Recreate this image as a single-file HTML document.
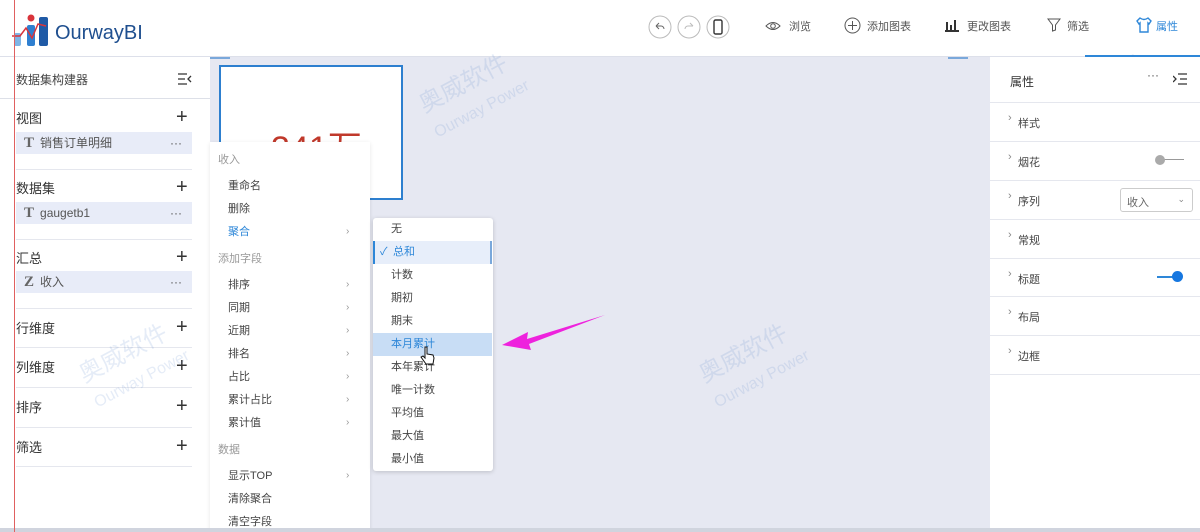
<!DOCTYPE html><html><head><meta charset="utf-8"><style>
*{margin:0;padding:0;box-sizing:border-box}
body{width:1200px;height:532px;overflow:hidden;position:relative;background:#e6e8f2;font-family:"Liberation Sans","Noto Sans CJK SC",sans-serif;font-size:12px;color:#333}
.a{position:absolute}
.hdr{left:0;top:0;width:1200px;height:57px;background:#fff;border-bottom:1px solid #dde0ea}
.lp{left:0;top:57px;width:210px;height:475px;background:#fff}
.rp{left:990px;top:57px;width:210px;height:475px;background:#fff}
.sec{position:absolute;left:16px;font-size:13px;color:#333}
.plus{position:absolute;left:176px;font-size:20px;color:#333;line-height:1}
.item{position:absolute;left:16px;width:176px;height:22px;background:#e8ecf8;font-size:12px;color:#555;line-height:22px;padding-left:8px}
.item b{font-family:"Liberation Serif",serif;font-size:15px;color:#666;margin-right:6px}
.item i{position:absolute;right:10px;font-style:normal;color:#555}
.hl{position:absolute;left:0;width:192px;height:1px;background:#e5e7ee}
.mi{position:absolute;left:228px;font-size:11px;color:#444}
.mg{position:absolute;left:218px;font-size:11px;color:#999}
.ar{position:absolute;left:346px;font-size:10px;color:#999;margin-top:3px}
.si{position:absolute;left:373px;width:119px;height:23px;line-height:23px;padding-left:18px;font-size:11px;color:#444}
.rr{position:absolute;left:990px;width:210px;height:1px;background:#e5e7ee}
.rt{position:absolute;left:1018px;font-size:11px;color:#444}
.rt:before{content:"›";position:absolute;left:-10px;top:-3px;color:#888}
.tb{position:absolute;top:18px;font-size:11px;color:#555}
.wm{position:absolute;color:rgba(70,120,200,.14);font-size:24px;transform:rotate(-28deg);white-space:nowrap}
</style></head><body>
<div class="a hdr"></div>
<svg class="a" style="left:12px;top:14px" width="40" height="34" viewBox="0 0 40 34"><circle cx="19" cy="4" r="3.5" fill="#d9343b"/><rect x="2" y="19" width="7" height="13" rx="2" fill="#7fb5e6"/><rect x="15" y="11" width="8" height="21" rx="2" fill="#2f7fd0"/><rect x="27" y="3" width="9" height="29" rx="2" fill="#1f5aa6"/><polyline points="0,22 8,22 14,14 20,24 26,10 34,12" fill="none" stroke="#d9343b" stroke-width="1.5"/></svg>
<div class="a" style="left:55px;top:22px;font-size:20px;color:#1f4f8f">OurwayBI</div>
<div class="a" style="left:14px;top:0;width:1px;height:532px;background:#e06060;z-index:20"></div>
<svg class="a" style="left:648px;top:15px" width="85" height="25"><g fill="none" stroke="#bbb"><circle cx="12" cy="12" r="11"/><circle cx="41" cy="12" r="11"/><circle cx="70" cy="12" r="11"/></g><path d="M8 11 l3-3 M8 11 l3 3 M8 11 h5 a3 3 0 0 1 3 3" stroke="#666" fill="none"/><path d="M45 11 l-3-3 M45 11 h-5 a3 3 0 0 0 -3 3" stroke="#bbb" fill="none"/><rect x="66" y="5" width="8" height="14" rx="1.5" stroke="#333" fill="none" stroke-width="1.4"/></svg>
<svg class="a" style="left:765px;top:18px" width="16" height="16"><path d="M1 8 Q8 1 15 8 Q8 15 1 8Z" fill="none" stroke="#555"/><circle cx="8" cy="8" r="2.3" fill="none" stroke="#555"/></svg><div class="tb" style="left:789px">浏览</div>
<svg class="a" style="left:844px;top:17px" width="17" height="17"><circle cx="8.5" cy="8.5" r="7.5" fill="none" stroke="#555"/><path d="M8.5 4v9M4 8.5h9" stroke="#555"/></svg><div class="tb" style="left:867px">添加图表</div>
<svg class="a" style="left:944px;top:18px" width="16" height="14"><path d="M1 13h14M3 12V4M7 12V7M11 12V2" stroke="#333" stroke-width="2"/></svg><div class="tb" style="left:967px">更改图表</div>
<svg class="a" style="left:1047px;top:18px" width="14" height="14"><path d="M1 1h12l-4.5 6v5l-3 1V7Z" fill="none" stroke="#555"/></svg><div class="tb" style="left:1067px">筛选</div>
<svg class="a" style="left:1136px;top:17px" width="16" height="16"><path d="M4 1 L1 4 L3 7 L4 6 V15 H12 V6 L13 7 L15 4 L12 1 Q8 4 4 1Z" fill="none" stroke="#2e87d8" stroke-width="1.4"/></svg><div class="tb" style="left:1156px;color:#2e87d8">属性</div>
<div class="a" style="left:1085px;top:55px;width:115px;height:2px;background:#2e87d8"></div>
<div class="a" style="left:948px;top:57px;width:20px;height:2px;background:#7aa8db"></div>
<div class="a" style="left:210px;top:57px;width:20px;height:2px;background:#7aa8db"></div>

<div class="a lp"></div>
<div class="a" style="left:16px;top:71px;font-size:12px;color:#444">数据集构建器</div>
<svg class="a" style="left:178px;top:73px" width="14" height="12"><path d="M0 1h9M0 6h7M0 11h9M13 3l-3 3 3 3" stroke="#333" fill="none" stroke-width="1.3"/></svg>
<div class="a" style="left:0;top:98px;width:210px;height:1px;background:#dde0e8"></div>
<div class="sec" style="top:108px">视图</div><div class="plus" style="top:107px">+</div>
<div class="item" style="top:132px"><b>T</b>销售订单明细<i>···</i></div>
<div class="hl" style="left:16px;top:169px;width:176px"></div>
<div class="sec" style="top:178px">数据集</div><div class="plus" style="top:177px">+</div>
<div class="item" style="top:202px"><b>T</b>gaugetb1<i>···</i></div>
<div class="hl" style="left:16px;top:239px;width:176px"></div>
<div class="sec" style="top:248px">汇总</div><div class="plus" style="top:247px">+</div>
<div class="item" style="top:271px"><b>Z</b>收入<i>···</i></div>
<div class="hl" style="left:16px;top:308px;width:176px"></div>
<div class="sec" style="top:318px">行维度</div><div class="plus" style="top:317px">+</div>
<div class="hl" style="left:16px;top:347px;width:176px"></div>
<div class="sec" style="top:357px">列维度</div><div class="plus" style="top:356px">+</div>
<div class="hl" style="left:16px;top:387px;width:176px"></div>
<div class="sec" style="top:397px">排序</div><div class="plus" style="top:396px">+</div>
<div class="hl" style="left:16px;top:427px;width:176px"></div>
<div class="sec" style="top:437px">筛选</div><div class="plus" style="top:436px">+</div>
<div class="hl" style="left:16px;top:466px;width:176px"></div>

<div class="a" style="left:219px;top:65px;width:184px;height:135px;background:#fff;border:2px solid #2d7fcf;overflow:hidden"><div style="position:absolute;left:50px;top:54px;font-size:34px;color:#c0392b">341万</div></div>

<div class="wm" style="left:420px;top:60px">奥威软件<br><span style="font-size:16px">Ourway Power</span></div>
<div class="wm" style="left:80px;top:330px">奥威软件<br><span style="font-size:16px">Ourway Power</span></div>
<div class="wm" style="left:700px;top:330px">奥威软件<br><span style="font-size:16px">Ourway Power</span></div>
<div class="wm" style="left:1060px;top:60px">奥威软件<br><span style="font-size:16px">Ourway Power</span></div>

<div class="a" style="left:210px;top:142px;width:160px;height:390px;background:#fff;box-shadow:0 1px 4px rgba(0,0,0,.1)"></div>
<div class="mg" style="top:151px">收入</div>
<div class="mi" style="top:177px">重命名</div>
<div class="mi" style="top:200px">删除</div>
<div class="mi" style="top:223px;color:#2e87d8">聚合</div><div class="ar" style="top:223px">›</div>
<div class="mg" style="top:250px">添加字段</div>
<div class="mi" style="top:276px">排序</div><div class="ar" style="top:276px">›</div>
<div class="mi" style="top:299px">同期</div><div class="ar" style="top:299px">›</div>
<div class="mi" style="top:322px">近期</div><div class="ar" style="top:322px">›</div>
<div class="mi" style="top:345px">排名</div><div class="ar" style="top:345px">›</div>
<div class="mi" style="top:368px">占比</div><div class="ar" style="top:368px">›</div>
<div class="mi" style="top:391px">累计占比</div><div class="ar" style="top:391px">›</div>
<div class="mi" style="top:414px">累计值</div><div class="ar" style="top:414px">›</div>
<div class="mg" style="top:441px">数据</div>
<div class="mi" style="top:467px">显示TOP</div><div class="ar" style="top:467px">›</div>
<div class="mi" style="top:490px">清除聚合</div>
<div class="mi" style="top:513px">清空字段</div>

<div class="a" style="left:373px;top:218px;width:120px;height:253px;background:#fff;border-radius:3px;box-shadow:0 1px 5px rgba(0,0,0,.18)"></div>
<div class="si" style="top:218px">无</div>
<div class="si" style="top:241px;background:#e7eefa;border-left:2px solid #2e87d8;border-right:2px solid #7aa8db;color:#2e87d8"><span style="position:absolute;left:5px">✓</span>总和</div>
<div class="si" style="top:264px">计数</div>
<div class="si" style="top:287px">期初</div>
<div class="si" style="top:310px">期末</div>
<div class="si" style="top:333px;background:#c8ddf5;color:#2e87d8">本月累计</div>
<div class="si" style="top:356px">本年累计</div>
<div class="si" style="top:379px">唯一计数</div>
<div class="si" style="top:402px">平均值</div>
<div class="si" style="top:425px">最大值</div>
<div class="si" style="top:448px">最小值</div>
<svg class="a" style="left:420px;top:346px" width="16" height="20"><path d="M5 1v11l-2-2-2 1 5 7h7l1-6-1-3-6-1V1Z" fill="#fff" stroke="#111"/></svg>
<svg class="a" style="left:498px;top:312px" width="110" height="40"><polygon points="4,33 30,20 29,27 107,3 31,32 33,38" fill="#ee22dd"/></svg>

<div class="a rp"></div>
<div class="a" style="left:1010px;top:73px;font-size:12px;color:#333">属性</div>
<div class="a" style="left:1147px;top:68px;color:#555">···</div>
<svg class="a" style="left:1173px;top:73px" width="14" height="12"><path d="M5 1h9M7 6h7M5 11h9M0 3l3 3-3 3" stroke="#333" fill="none" stroke-width="1.3"/></svg>
<div class="rr" style="top:102px"></div>
<div class="rt" style="top:115px">样式</div><div class="rr" style="top:141px"></div>
<div class="rt" style="top:154px">烟花</div><div class="rr" style="top:180px"></div>
<div class="a" style="left:1160px;top:159px;width:24px;height:1px;background:#999"></div><div class="a" style="left:1155px;top:155px;width:10px;height:10px;border-radius:50%;background:#aaa"></div>
<div class="rt" style="top:193px">序列</div><div class="rr" style="top:219px"></div>
<div class="a" style="left:1120px;top:188px;width:73px;height:24px;border:1px solid #ccc;border-radius:3px;font-size:11px;color:#666;padding:5px 6px">收入<span style="position:absolute;right:7px;font-size:9px;color:#888">⌄</span></div>
<div class="rt" style="top:232px">常规</div><div class="rr" style="top:258px"></div>
<div class="rt" style="top:271px">标题</div><div class="rr" style="top:296px"></div>
<div class="a" style="left:1157px;top:276px;width:24px;height:2px;background:#2e87d8"></div><div class="a" style="left:1172px;top:271px;width:11px;height:11px;border-radius:50%;background:#1677e0"></div>
<div class="rt" style="top:309px">布局</div><div class="rr" style="top:335px"></div>
<div class="rt" style="top:348px">边框</div><div class="rr" style="top:374px"></div>
<div class="a" style="left:0;top:528px;width:1200px;height:4px;background:#d0d4de"></div>
</body></html>
